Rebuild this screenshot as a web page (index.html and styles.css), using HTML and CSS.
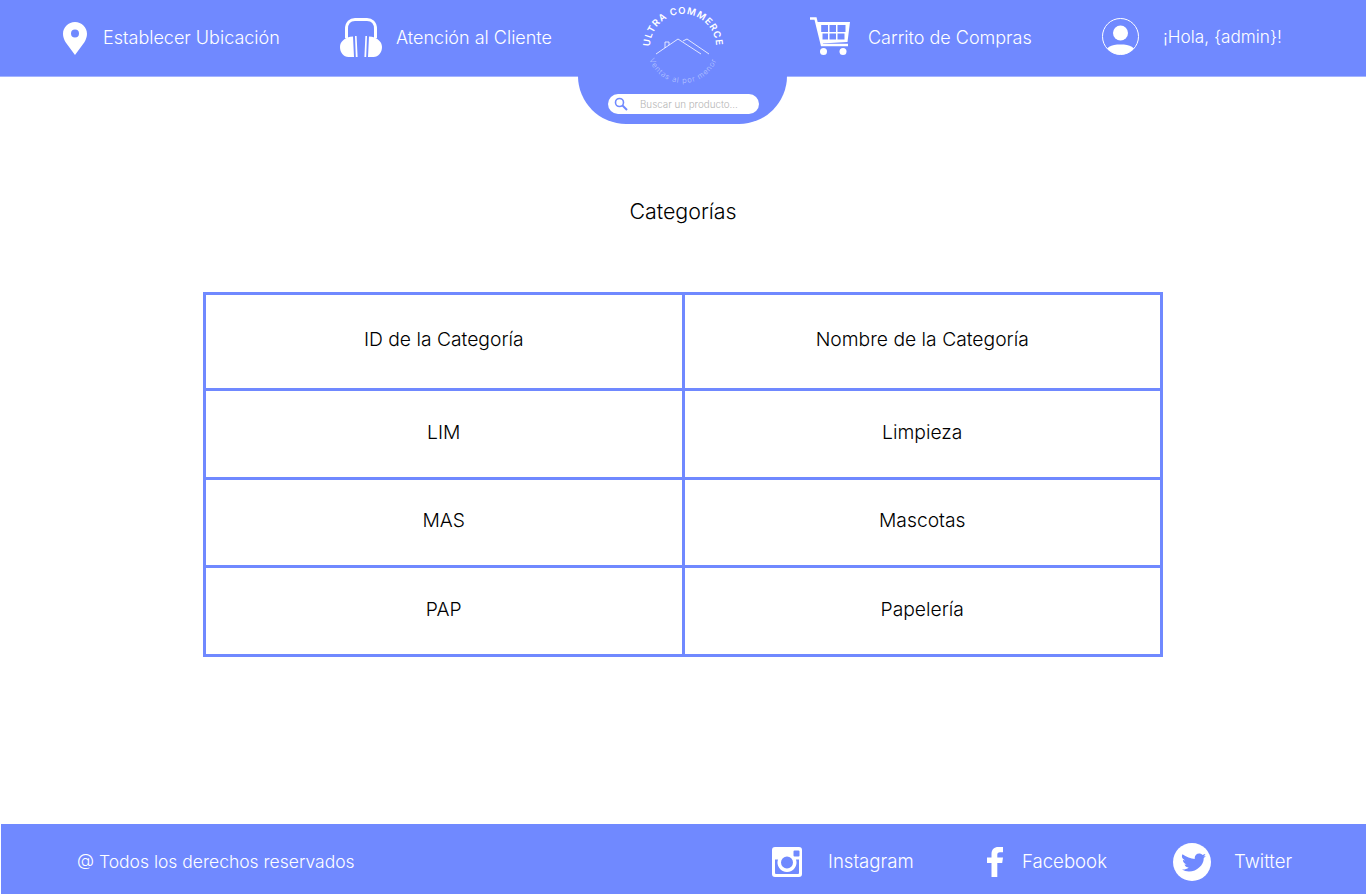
FILE: index.html
```html
<!DOCTYPE html>
<html lang="es">
<head>
    <meta charset="UTF-8">
    <meta name="viewport" content="width=device-width, initial-scale=1.0">
    <title>Ultra Commerce</title>
    <link rel="stylesheet" href="styles.css">
</head>
<body>
    <header class="topbar">
        <a class="nav-item nav-location" href="#">
            <svg class="icon-pin" viewBox="0 0 24 33"><path fill-rule="evenodd" fill="#fff" d="M12 0C5.4 0 0 5.2 0 11.7c0 3 1 5.7 2.600 8.500L12 33l9.400-12.800c1.600-2.800 2.600-5.500 2.600-8.500C24 5.200 18.600 0 12 0zm0 7.600a4 4 0 1 1 0 8 4 4 0 0 1 0-8z"/></svg>
            <span>Establecer Ubicación</span>
        </a>
        <a class="nav-item nav-support" href="#">
            <svg class="icon-phones" viewBox="0 0 42 39"><path fill="none" stroke="#fff" stroke-width="3" d="M6.500 20V11C6.500 4.500 10.500 1.500 15 1.500h12c4.500 0 8.500 3 8.500 9.500v9"/><path fill="#fff" d="M13 18.500C5 19 0 23.500 0 29c0 5.500 3.500 10 8.500 10H14zM29 18.500C37 19 42 23.500 42 29c0 5.500-3.500 10-8.500 10H28z"/><path fill="#fff" d="M15 18h1.600l1 21h-1.800zM27 18h-1.600l-1 21h1.800z"/></svg>
            <span>Atención al Cliente</span>
        </a>
        <div class="logo-slot">
            <svg class="logo" viewBox="0 0 90 86">
                <defs>
                    <path id="arcTop" d="M12 47A33 33 0 0 1 78 47"/>
                    <path id="arcBottom" d="M9 47A36 36 0 0 0 81 47"/>
                </defs>
                <text class="logo-name"><textPath href="#arcTop" startOffset="50%" text-anchor="middle">ULTRA COMMERCE</textPath></text>
                <text class="logo-sub"><textPath href="#arcBottom" startOffset="50%" text-anchor="middle">Ventas al por menor</textPath></text>
                <path fill="none" stroke="#fff" stroke-width="0.8" d="M18 54 40 39l23 15M45 41l4-2 22 15M27 48v-6h4v3"/>
            </svg>
        </div>
        <a class="nav-item nav-cart" href="#">
            <svg class="icon-cart" viewBox="0 0 40 38"><path fill="none" stroke="#fff" stroke-width="2.600" d="M0 1.500h5.500L12 28h26"/><path fill-rule="evenodd" fill="#fff" d="M6.500 5H40l-2.500 20-26 1.500zM11.200 8v7h6.800V8zM19.500 8v7h6.500V8zM27.500 8v7h8V8zM12.500 16.500v6h5.500v-6zM19.500 16.500v6h6.500v-6zM27.500 16.500v6h7v-6z"/><circle cx="13.500" cy="34.500" r="3.500" fill="#fff"/><circle cx="33" cy="34.500" r="3.500" fill="#fff"/></svg>
            <span>Carrito de Compras</span>
        </a>
        <a class="nav-item nav-user" href="#">
            <svg class="icon-user" viewBox="0 0 37 37"><defs><clipPath id="userClip"><circle cx="18.500" cy="18.500" r="18"/></clipPath></defs><circle cx="18.500" cy="15" r="7.500" fill="#fff"/><path clip-path="url(#userClip)" fill="#fff" d="M3 37c0-8 6-10.500 15.500-10.500S34 29 34 37z"/><circle cx="18.500" cy="18.500" r="18" fill="none" stroke="#fff"/></svg>
            <span class="greeting">¡Hola, {admin}!</span>
        </a>
    </header>

    <div class="search-tab">
        <form class="search-box">
            <svg class="icon-search" viewBox="0 0 14 14"><circle cx="5.500" cy="5.500" r="4" fill="none" stroke="#7089ff" stroke-width="1.600"/><path stroke="#7089ff" stroke-width="2" d="m8.500 8.500 4.500 4.500"/></svg>
            <span class="search-hint">Buscar un producto...</span>
        </form>
    </div>

    <main class="content">
        <h1 class="page-title">Categorías</h1>
        <table class="data-table">
            <tr class="head-row"><td>ID de la Categoría</td><td>Nombre de la Categoría</td></tr>
            <tr><td>LIM</td><td>Limpieza</td></tr>
            <tr><td>MAS</td><td>Mascotas</td></tr>
            <tr><td>PAP</td><td>Papelería</td></tr>
        </table>
    </main>

    <footer class="bottombar">
        <p class="rights">@ Todos los derechos reservados</p>
        <a class="social social-ig" href="#">
            <svg class="icon-ig" viewBox="0 0 30 30"><path fill-rule="evenodd" fill="#fff" d="M3 0h24a3 3 0 0 1 3 3v24a3 3 0 0 1-3 3H3a3 3 0 0 1-3-3V3a3 3 0 0 1 3-3zm19.500 3.500a1 1 0 0 0-1 1v4a1 1 0 0 0 1 1h4a1 1 0 0 0 1-1v-4a1 1 0 0 0-1-1zM3 12.500V26a1 1 0 0 0 1 1h22a1 1 0 0 0 1-1V12.500h-3a9.500 9.500 0 1 1-18 0zM15 9.500a6 6 0 1 0 0 12 6 6 0 0 0 0-12z"/></svg>
            <span>Instagram</span>
        </a>
        <a class="social social-fb" href="#">
            <svg class="icon-fb" viewBox="0 0 16 30"><path fill="#fff" d="M4.500 30V16H0v-5.500h4.500V7c0-4.500 2.800-7 6.800-7H16v5.200h-3c-2 0-2.700 1-2.700 2.600v2.700H16l-.8 5.500h-4.900v14z"/></svg>
            <span>Facebook</span>
        </a>
        <a class="social social-tw" href="#">
            <svg class="icon-tw" viewBox="0 0 38 38"><circle cx="19" cy="19" r="19" fill="#fff"/><path fill="#7089ff" d="M32 11c-.8.5-1.600.8-2.500 1-.9-1-2-1.500-3.300-1.500-2.500 0-4.500 2-4.500 4.500 0 .4 0 .7.100 1-3.700-.2-9-2-12.300-4.700-.4.700-.6 1.400-.6 2.300 0 1.600 1.800 3 3 3.800-.7 0-1.400-.2-2-.6v.1c0 2.200 1.600 4 3.600 4.400-.7.200-1.400.2-2 .1.600 1.800 2.200 3.100 4.200 3.100-2 1.500-4 2.200-6.700 2 2 1.300 4.400 2 6.900 2 8.300 0 14.800-6.900 14.800-12.800v-.6c.9-.6 1.600-1.400 2.200-2.300-.8.400-1.600.6-2.500.7.900-.6 1.600-1.400 2-2.500z"/></svg>
            <span>Twitter</span>
        </a>
    </footer>
</body>
</html>
```

FILE: styles.css
```css
* {
    box-sizing: border-box;
}
body {
    margin: 0;
    height: 894px;
    display: flex;
    flex-direction: column;
    background-color: #fff;
    color: #000;
    font-family: "Inter", "Liberation Sans", sans-serif;
    overflow: hidden;
}
a {
    color: #fff;
    text-decoration: none;
}

/* top bar */
.topbar {
    height: 77px;
    flex: none;
    display: flex;
    align-items: center;
    padding-left: 63px;
    padding-bottom: 2px;
    background-color: #7089ff;
    border-bottom: 1px solid #a3b4ff;
    color: #fff;
    font-size: 18px;
    font-weight: 300;
}
.nav-item {
    display: flex;
    align-items: center;
}
.nav-location {
    width: 277px;
    gap: 16px;
}
.nav-support {
    width: 254px;
    gap: 14px;
}
.logo-slot {
    width: 216px;
    height: 76px;
    padding-left: 44px;
    position: relative;
    z-index: 2;
    align-self: flex-start;
}
.nav-cart {
    width: 292px;
    gap: 18px;
}
.nav-user {
    gap: 24px;
}
.greeting {
    font-size: 17.200px;
    margin-bottom: 2px;
}
.icon-pin { width: 24px; height: 33px; margin-top: 2px; }
.icon-phones { width: 42px; height: 39px; }
.icon-cart { width: 40px; height: 38px; margin-bottom: 2px; }
.icon-user { width: 37px; height: 37px; margin-bottom: 2px; }
.logo {
    display: block;
    width: 90px;
    height: 86px;
}
.logo-name {
    fill: #fff;
    font-size: 9.500px;
    font-weight: 600;
    letter-spacing: 0.900px;
}
.logo-sub {
    fill: #b9c6ff;
    font-size: 7.500px;
    letter-spacing: 0.900px;
}

/* search tab hanging under the bar */
.search-tab {
    position: absolute;
    top: 76px;
    left: 578px;
    width: 209px;
    height: 48px;
    padding: 18px 28px 0 30px;
    background-color: #7089ff;
    border-radius: 0 0 48px 48px;
}
.search-box {
    height: 20px;
    display: flex;
    align-items: center;
    padding-left: 6px;
    gap: 12px;
    background-color: #fff;
    border-radius: 10px;
}
.icon-search { width: 14px; height: 14px; }
.search-hint {
    font-size: 9.800px;
    font-weight: 300;
    color: #b5b5b5;
}

/* table */
.content {
    flex: 1;
    padding-top: 122px;
}
.page-title {
    margin: 0 0 69px;
    height: 24px;
    line-height: 24px;
    text-align: center;
    font-size: 21.400px;
    font-weight: 300;
}
.data-table {
    width: 960px;
    margin-left: 203px;
    border-collapse: collapse;
    border: 3px solid #7089ff;
    table-layout: fixed;
    font-size: 19.300px;
    font-weight: 300;
}
.data-table td {
    height: 88.500px;
    padding-bottom: 5px;
    border: 3px solid #7089ff;
    text-align: center;
}
.data-table .head-row td {
    height: 96px;
    padding-bottom: 7px;
}

/* footer */
.bottombar {
    height: 70px;
    flex: none;
    margin-left: 1px;
    display: flex;
    align-items: center;
    padding-left: 76px;
    padding-top: 4px;
    background-color: #7089ff;
    color: #fff;
    font-size: 18.600px;
    font-weight: 300;
}
.rights {
    margin: 0;
    width: 695px;
    font-size: 17.500px;
}
.social {
    display: flex;
    align-items: center;
}
.social-ig { width: 215px; gap: 26px; }
.social-fb { width: 186px; gap: 19px; }
.social-tw { gap: 23px; }
.icon-ig { width: 30px; height: 30px; margin-top: 2px; }
.icon-fb { width: 16px; height: 30px; margin-top: 2px; }
.icon-tw { width: 38px; height: 38px; margin-top: 2px; }
```
